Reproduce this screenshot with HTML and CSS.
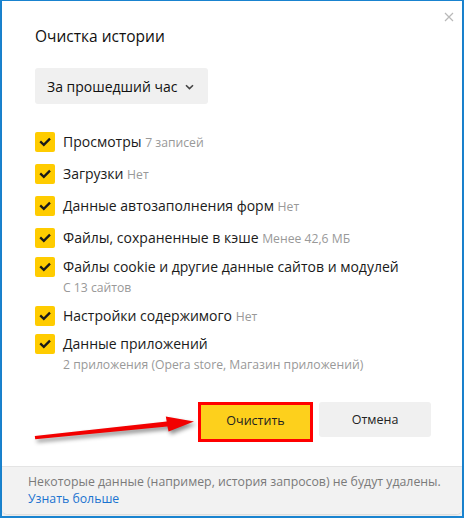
FILE: index.html
```html
<!DOCTYPE html>
<html lang="ru">
<head>
<meta charset="utf-8">
<title>Очистка истории</title>
<link rel="stylesheet" href="styles.css">
</head>
<body>
<div class="window">
  <div class="dialog">
    <button class="close" aria-label="Закрыть">
      <svg width="10" height="10" viewBox="0 0 10 10"><path d="M1 1L9 9M9 1L1 9" stroke="#b9b9b9" stroke-width="1.2" fill="none"/></svg>
    </button>
    <div class="content">
      <h1 class="title">Очистка истории</h1>
      <div class="select">
        <span>За прошедший час</span>
        <svg class="chev" width="9" height="6" viewBox="0 0 9 6"><path d="M1 1.2L4.5 4.6L8 1.2" stroke="#444" stroke-width="1.6" fill="none"/></svg>
      </div>
      <ul class="list">
        <li class="item">
          <span class="box"><svg width="20" height="20" viewBox="0 0 20 20"><path d="M5.2 9.4L8.8 12.8L15 6.6" stroke="#1a1a1a" stroke-width="2.3" fill="none"/></svg></span>
          <div class="text"><span class="label">Просмотры</span> <span class="note">7 записей</span></div>
        </li>
        <li class="item">
          <span class="box"><svg width="20" height="20" viewBox="0 0 20 20"><path d="M5.2 9.4L8.8 12.8L15 6.6" stroke="#1a1a1a" stroke-width="2.3" fill="none"/></svg></span>
          <div class="text"><span class="label">Загрузки</span> <span class="note">Нет</span></div>
        </li>
        <li class="item">
          <span class="box"><svg width="20" height="20" viewBox="0 0 20 20"><path d="M5.2 9.4L8.8 12.8L15 6.6" stroke="#1a1a1a" stroke-width="2.3" fill="none"/></svg></span>
          <div class="text"><span class="label">Данные автозаполнения форм</span> <span class="note">Нет</span></div>
        </li>
        <li class="item">
          <span class="box"><svg width="20" height="20" viewBox="0 0 20 20"><path d="M5.2 9.4L8.8 12.8L15 6.6" stroke="#1a1a1a" stroke-width="2.3" fill="none"/></svg></span>
          <div class="text"><span class="label">Файлы, сохраненные в кэше</span> <span class="note">Менее 42,6 МБ</span></div>
        </li>
        <li class="item item-near">
          <span class="box"><svg width="20" height="20" viewBox="0 0 20 20"><path d="M5.2 9.4L8.8 12.8L15 6.6" stroke="#1a1a1a" stroke-width="2.3" fill="none"/></svg></span>
          <div class="text"><span class="label">Файлы cookie и другие данные сайтов и модулей</span><div class="note sub">С 13 сайтов</div></div>
        </li>
        <li class="item item-close">
          <span class="box"><svg width="20" height="20" viewBox="0 0 20 20"><path d="M5.2 9.4L8.8 12.8L15 6.6" stroke="#1a1a1a" stroke-width="2.3" fill="none"/></svg></span>
          <div class="text"><span class="label">Настройки содержимого</span> <span class="note">Нет</span></div>
        </li>
        <li class="item item-close">
          <span class="box"><svg width="20" height="20" viewBox="0 0 20 20"><path d="M5.2 9.4L8.8 12.8L15 6.6" stroke="#1a1a1a" stroke-width="2.3" fill="none"/></svg></span>
          <div class="text"><span class="label">Данные приложений</span><div class="note sub">2 приложения (Opera store, Магазин приложений)</div></div>
        </li>
      </ul>
      <div class="actions">
        <button class="btn btn-primary">Очистить</button>
        <button class="btn btn-secondary">Отмена</button>
      </div>
    </div>
    <div class="footer">
      <div class="footer-text">Некоторые данные (например, история запросов) не будут удалены.</div>
      <a class="footer-link" href="#">Узнать больше</a>
    </div>
    <svg class="arrow" width="464" height="518" viewBox="0 0 464 518">
      <polygon points="34.8,436 166.7,421.6 165.8,416.6 194,421.4 168.6,431.4 167.4,426.4 35.2,439.2" fill="#f20000"/>
    </svg>
  </div>
</div>
</body>
</html>
```

FILE: styles.css
```css
* { box-sizing: border-box; }

html, body {
  margin: 0;
  padding: 0;
}

body {
  width: 464px;
  height: 518px;
  background: #1a84d0;
  padding: 1px 2px 2px 2px;
  font-family: "Open Sans", "Noto Sans", sans-serif;
  color: #1a1a1a;
  overflow: hidden;
}

.window {
  height: 515px;
  background: #f3f3f3;
}

.dialog {
  position: relative;
  height: 513px;
  background: #ffffff;
  border-radius: 0 0 6px 6px;
  box-shadow: 0 1px 2px rgba(0, 0, 0, 0.12);
  display: flex;
  flex-direction: column;
  overflow: hidden;
}

.close {
  position: absolute;
  top: 10px;
  right: 7px;
  width: 12px;
  height: 12px;
  padding: 1px;
  border: 0;
  background: transparent;
  display: flex;
  align-items: center;
  justify-content: center;
}

.content {
  padding: 25px 31px 0 33px;
}

.title {
  margin: 0;
  font-size: 15.5px;
  line-height: 20px;
  font-weight: 400;
  color: #111;
}

.select {
  margin-top: 22px;
  width: 173px;
  height: 36px;
  background: #f0f0f0;
  border-radius: 3px;
  display: flex;
  align-items: center;
  justify-content: space-between;
  padding: 0 14px 0 12px;
  font-size: 14px;
  color: #111;
}

.chev { margin-top: 1px; }

.list {
  list-style: none;
  margin: 28px 0 0 0;
  padding: 0;
  display: flex;
  flex-direction: column;
}

.item {
  display: flex;
  align-items: flex-start;
  gap: 8px;
  margin-top: 12px;
}

.item:first-child { margin-top: 0; }
.item-near { margin-top: 9px; }
.item-close { margin-top: 8px; }

.box {
  flex: none;
  width: 20px;
  height: 20px;
  background: #ffcc00;
  border-radius: 2px;
  display: flex;
}

.text {
  line-height: 20px;
  font-size: 14px;
  white-space: nowrap;
}

.label { color: #1a1a1a; }

.note {
  font-size: 12.2px;
  line-height: 1;
  color: #999999;
}

.sub {
  line-height: 20px;
  margin-top: 1px;
}

.actions {
  margin-top: 27px;
  display: flex;
  justify-content: flex-end;
  align-items: flex-start;
  gap: 6px;
}

.btn {
  font-family: inherit;
  font-size: 12.5px;
  color: #222;
  border-radius: 3px;
  cursor: pointer;
}

.btn-primary {
  width: 115px;
  height: 40px;
  background: #fdd01c;
  border: 3px solid #ff0000;
  border-radius: 0;
  padding: 0 0 4px 0;
}

.btn-secondary {
  width: 112px;
  height: 35px;
  background: #f0f0f0;
  border: 0;
  padding: 0;
}

.footer {
  margin-top: auto;
  height: 48px;
  background: #f2f2f2;
  border-top: 1px solid #e4e4e4;
  padding: 6px 10px 0 26px;
  font-size: 12.3px;
  line-height: 17px;
  white-space: nowrap;
}

.footer-text { color: #7a7a7a; }

.footer-link {
  color: #1a73d0;
  text-decoration: none;
}

.arrow {
  position: absolute;
  left: -2px;
  top: -1px;
  pointer-events: none;
  filter: drop-shadow(2px 3px 2px rgba(0, 0, 0, 0.45));
}
```
